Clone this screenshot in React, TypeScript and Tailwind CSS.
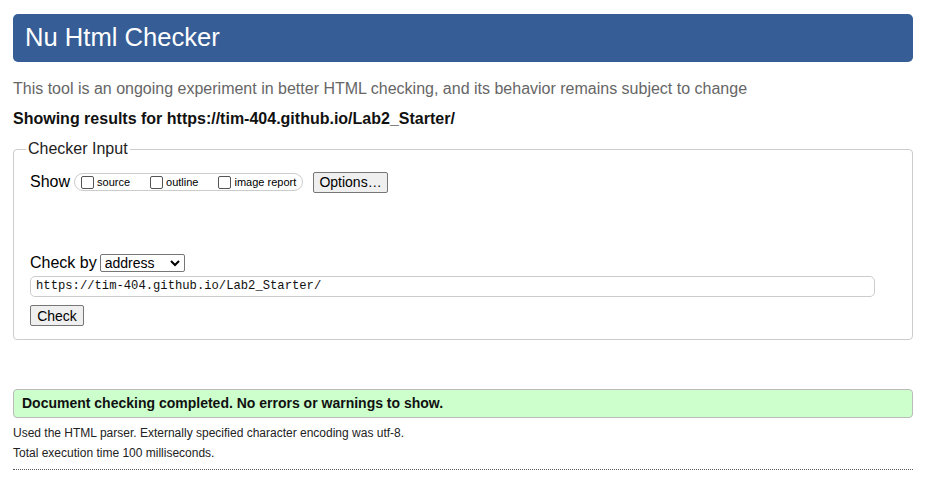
export default function App() {
  return (
    <div className="w-[928px] h-[501px] bg-white overflow-hidden font-['Liberation_Sans',Arial,sans-serif] text-black">
      <div className="ml-[13px] w-[900px] flex flex-col">
        <header className="mt-[14px] h-[48px] rounded-[5px] bg-[#365d95] flex items-center pl-[12px]">
          <h1 className="text-[25.6px] text-white leading-none">Nu Html Checker</h1>
        </header>

        <p className="mt-[18px] text-[16px] leading-[18px] text-[#666666]">
          This tool is an ongoing experiment in better HTML checking, and its behavior remains subject to change
        </p>
        <p className="mt-[12px] text-[16px] leading-[18px] font-bold text-[#111]">
          Showing results for https://tim-404.github.io/Lab2_Starter/
        </p>

        <fieldset className="mt-[12px] border border-[#cccccc] rounded-[4px] px-[16px] pb-[12px] h-[200px]">
          <legend className="px-[2px] ml-[-4px] text-[16px] leading-[18px] text-[#222]">Checker Input</legend>

          <div className="mt-[13px] flex items-center h-[22px] whitespace-nowrap">
            <span className="text-[16px] leading-[18px] mr-[4px]">Show</span>
            <div className="h-[18px] w-[229px] shrink-0 border border-[#cccccc] rounded-[9px] flex items-center pl-[6px] text-[11px]">
              <label className="flex items-center shrink-0">
                <input type="checkbox" className="w-[13px] h-[13px] m-0 mr-[3px] appearance-none border border-[#555] rounded-[2px] bg-white" />
                <span>source</span>
              </label>
              <label className="flex items-center shrink-0 ml-[20px]">
                <input type="checkbox" className="w-[13px] h-[13px] m-0 mr-[3px] appearance-none border border-[#555] rounded-[2px] bg-white" />
                <span>outline</span>
              </label>
              <label className="flex items-center shrink-0 ml-[20px]">
                <input type="checkbox" className="w-[13px] h-[13px] m-0 mr-[3px] appearance-none border border-[#555] rounded-[2px] bg-white" />
                <span>image report</span>
              </label>
            </div>
            <button className="ml-[10px] h-[21px] w-[75px] shrink-0 border border-[#767676] rounded-[2px] bg-[#efefef] text-[14px] leading-none">
              Options…
            </button>
          </div>

          <div className="mt-[60px] flex items-center h-[20px]">
            <span className="text-[16px] leading-[18px] mr-[3px]">Check by</span>
            <div className="h-[18px] w-[85px] border border-[#767676] rounded-[2px] flex items-center justify-between pl-[4px] pr-[4px] text-[14px]">
              <span>address</span>
              <svg width="10" height="7" viewBox="0 0 10 7">
                <path d="M1 1 L5 5 L9 1" fill="none" stroke="#000" strokeWidth="2" />
              </svg>
            </div>
          </div>

          <div className="mt-[3px] h-[21px] w-[845px] border border-[#cccccc] rounded-[5px] flex items-center pl-[5px] font-['Liberation_Mono',monospace] text-[12.2px] text-[#111]">
            https://tim-404.github.io/Lab2_Starter/
          </div>

          <button className="mt-[8px] h-[21px] w-[54px] border border-[#767676] rounded-[2px] bg-[#efefef] text-[14px] leading-none">
            Check
          </button>
        </fieldset>

        <div className="mt-[49px] h-[29px] border border-[#bbbbbb] rounded-[4px] bg-[#ccffcc] flex items-center pl-[8px]">
          <span className="text-[14px] font-bold text-[#111]">
            Document checking completed. No errors or warnings to show.
          </span>
        </div>

        <p className="mt-[8px] text-[12px] leading-[14px] text-[#222]">
          Used the HTML parser. Externally specified character encoding was utf-8.
        </p>
        <p className="mt-[6px] text-[12px] leading-[14px] text-[#222]">Total execution time 100 milliseconds.</p>
        <div className="mt-[9px] border-t border-dotted border-[#555]"></div>
      </div>
    </div>
  );
}
